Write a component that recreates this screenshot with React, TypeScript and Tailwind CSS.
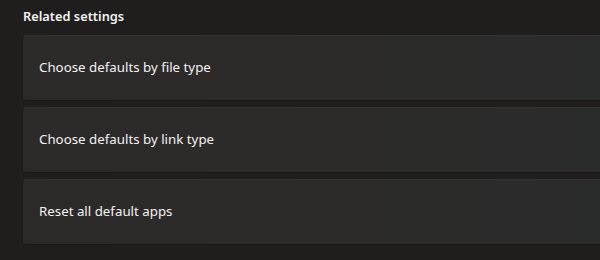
import React from 'react';

const items = [
  'Choose defaults by file type',
  'Choose defaults by link type',
  'Reset all default apps',
];

const App: React.FC = () => {
  return (
    <div
      className="w-[600px] h-[260px] overflow-hidden bg-[#201e1d] text-[#f2f2f2]"
      style={{ fontFamily: '"Noto Sans", "Open Sans", sans-serif' }}
    >
      <h3 className="pl-[23px] pt-[6px] h-[35px] text-[12.8px] font-semibold leading-[20px]">
        Related settings
      </h3>
      <ul className="flex flex-col gap-[6px] pl-[22px]">
        {items.map((label) => (
          <li
            key={label}
            className="h-[66px] w-[600px] flex items-center pl-[16px] rounded-l-[4px] border-l border-t border-b border-l-[#1b1a19] border-t-[#333130] border-b-[#191817] bg-gradient-to-r from-[#2c2a29] via-[#2c2b2a] to-[#2a2c2b] text-[13.3px]"
          >
            {label}
          </li>
        ))}
      </ul>
    </div>
  );
};

export default App;
